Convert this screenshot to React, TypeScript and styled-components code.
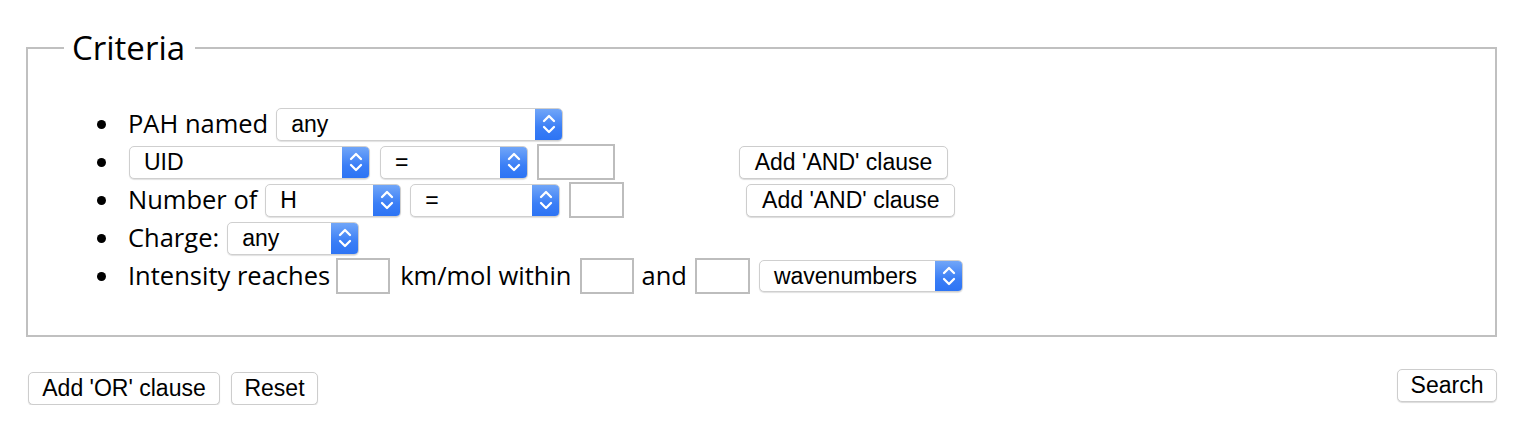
import React from "react";
import styled, { createGlobalStyle } from "styled-components";

const Global = createGlobalStyle`
  html, body { margin: 0; padding: 0; background: #fff; }
  body { font-family: "Open Sans", "Noto Sans", sans-serif; color: #000; }
`;

const Page = styled.div`
  padding: 28px 26px 0 26px;
`;

const Fieldset = styled.fieldset`
  margin: 0;
  padding: 0 0 40px 0;
  border: 2px solid #c0c0c0;
  min-width: 0;
`;

const Legend = styled.legend`
  margin-left: 36px;
  padding: 0 10px 0 8px;
  font-size: 33px;
  line-height: 40px;
  font-family: "Open Sans", sans-serif;
`;

const List = styled.ul`
  list-style: none;
  margin: 0;
  padding: 37px 0 0 69px;
`;

const Row = styled.li`
  display: flex;
  align-items: center;
  height: 38px;
  font-size: 25.5px;
  white-space: nowrap;
  &::before {
    content: "";
    width: 9px;
    height: 9px;
    border-radius: 50%;
    background: #000;
    margin-right: 22px;
    flex: none;
  }
`;

const Label = styled.span<{ $gap?: number }>`
  margin-right: ${(p) => p.$gap ?? 8}px;
  line-height: 1;
`;

const SelectBox = styled.div<{ $w: number; $h?: number; $ml?: number }>`
  position: relative;
  display: flex;
  align-items: center;
  width: ${(p) => p.$w}px;
  height: ${(p) => p.$h ?? 33}px;
  margin-left: ${(p) => p.$ml ?? 0}px;
  box-sizing: border-box;
  border: 1px solid #cfcfcf;
  border-radius: 5px;
  background: #fff;
  box-shadow: 0 1px 1px rgba(0, 0, 0, 0.12);
  font-family: "Liberation Sans", Arial, sans-serif;
  font-size: 23px;
  padding-left: 14px;
  overflow: hidden;
  flex: none;
`;

const SelectText = styled.span`
  flex: 1;
`;

const ArrowBox = styled.div`
  width: 28px;
  align-self: stretch;
  margin: -1px -1px -1px 0;
  border-radius: 0 5px 5px 0;
  background: linear-gradient(to bottom, #74a8f8 0%, #3a7ef6 60%, #2c73f4 100%);
  display: flex;
  align-items: center;
  justify-content: center;
`;

const TextInput = styled.div<{ $w: number; $ml?: number; $mr?: number }>`
  width: ${(p) => p.$w}px;
  height: 36px;
  box-sizing: border-box;
  border: 2px solid #bdbdbd;
  background: #fff;
  margin-left: ${(p) => p.$ml ?? 0}px;
  margin-right: ${(p) => p.$mr ?? 0}px;
  flex: none;
`;

const Button = styled.button<{ $w: number; $ml?: number }>`
  width: ${(p) => p.$w}px;
  height: 33px;
  margin: 0 0 0 ${(p) => p.$ml ?? 0}px;
  padding: 0;
  box-sizing: border-box;
  border: 1px solid #cdcdcd;
  border-radius: 5px;
  background: #fff;
  box-shadow: 0 1px 1px rgba(0, 0, 0, 0.14);
  font-family: "Liberation Sans", Arial, sans-serif;
  font-size: 23px;
  color: #000;
  flex: none;
`;

const Footer = styled.div`
  display: flex;
  justify-content: space-between;
  align-items: flex-start;
  margin-top: 32px;
  padding-left: 2px;
`;

const FooterLeft = styled.div`
  display: flex;
  gap: 11px;
  margin-top: 3px;
`;

const Chevrons = () => (
  <svg width="16" height="24" viewBox="0 0 16 24" fill="none">
    <path d="M3 9 L8 4 L13 9" stroke="#fff" strokeWidth="2.3" strokeLinecap="round" strokeLinejoin="round" />
    <path d="M3 15 L8 20 L13 15" stroke="#fff" strokeWidth="2.3" strokeLinecap="round" strokeLinejoin="round" />
  </svg>
);

const Select = ({ value, w, h, ml }: { value: string; w: number; h?: number; ml?: number }) => (
  <SelectBox $w={w} $h={h} $ml={ml}>
    <SelectText>{value}</SelectText>
    <ArrowBox>
      <Chevrons />
    </ArrowBox>
  </SelectBox>
);

export default function App() {
  return (
    <>
      <Global />
      <Page>
        <Fieldset>
          <Legend>Criteria</Legend>
          <List>
            <Row>
              <Label>PAH named</Label>
              <Select value="any" w={287} />
            </Row>
            <Row>
              <Select value="UID" w={241} ml={1} />
              <Select value="=" w={148} ml={10} />
              <TextInput $w={78} $ml={9} />
              <Button $w={209} $ml={124}>Add 'AND' clause</Button>
            </Row>
            <Row>
              <Label>Number of</Label>
              <Select value="H" w={136} />
              <Select value="=" w={150} ml={9} />
              <TextInput $w={55} $ml={9} />
              <Button $w={209} $ml={122}>Add 'AND' clause</Button>
            </Row>
            <Row>
              <Label>Charge:</Label>
              <Select value="any" w={132} />
            </Row>
            <Row>
              <Label $gap={6}>Intensity reaches</Label>
              <TextInput $w={54} $mr={10} />
              <Label>km/mol within</Label>
              <TextInput $w={54} $mr={8} />
              <Label>and</Label>
              <TextInput $w={55} $mr={9} />
              <Select value="wavenumbers" w={204} h={32} />
            </Row>
          </List>
        </Fieldset>
        <Footer>
          <FooterLeft>
            <Button $w={192}>Add 'OR' clause</Button>
            <Button $w={87}>Reset</Button>
          </FooterLeft>
          <Button $w={100}>Search</Button>
        </Footer>
      </Page>
    </>
  );
}
